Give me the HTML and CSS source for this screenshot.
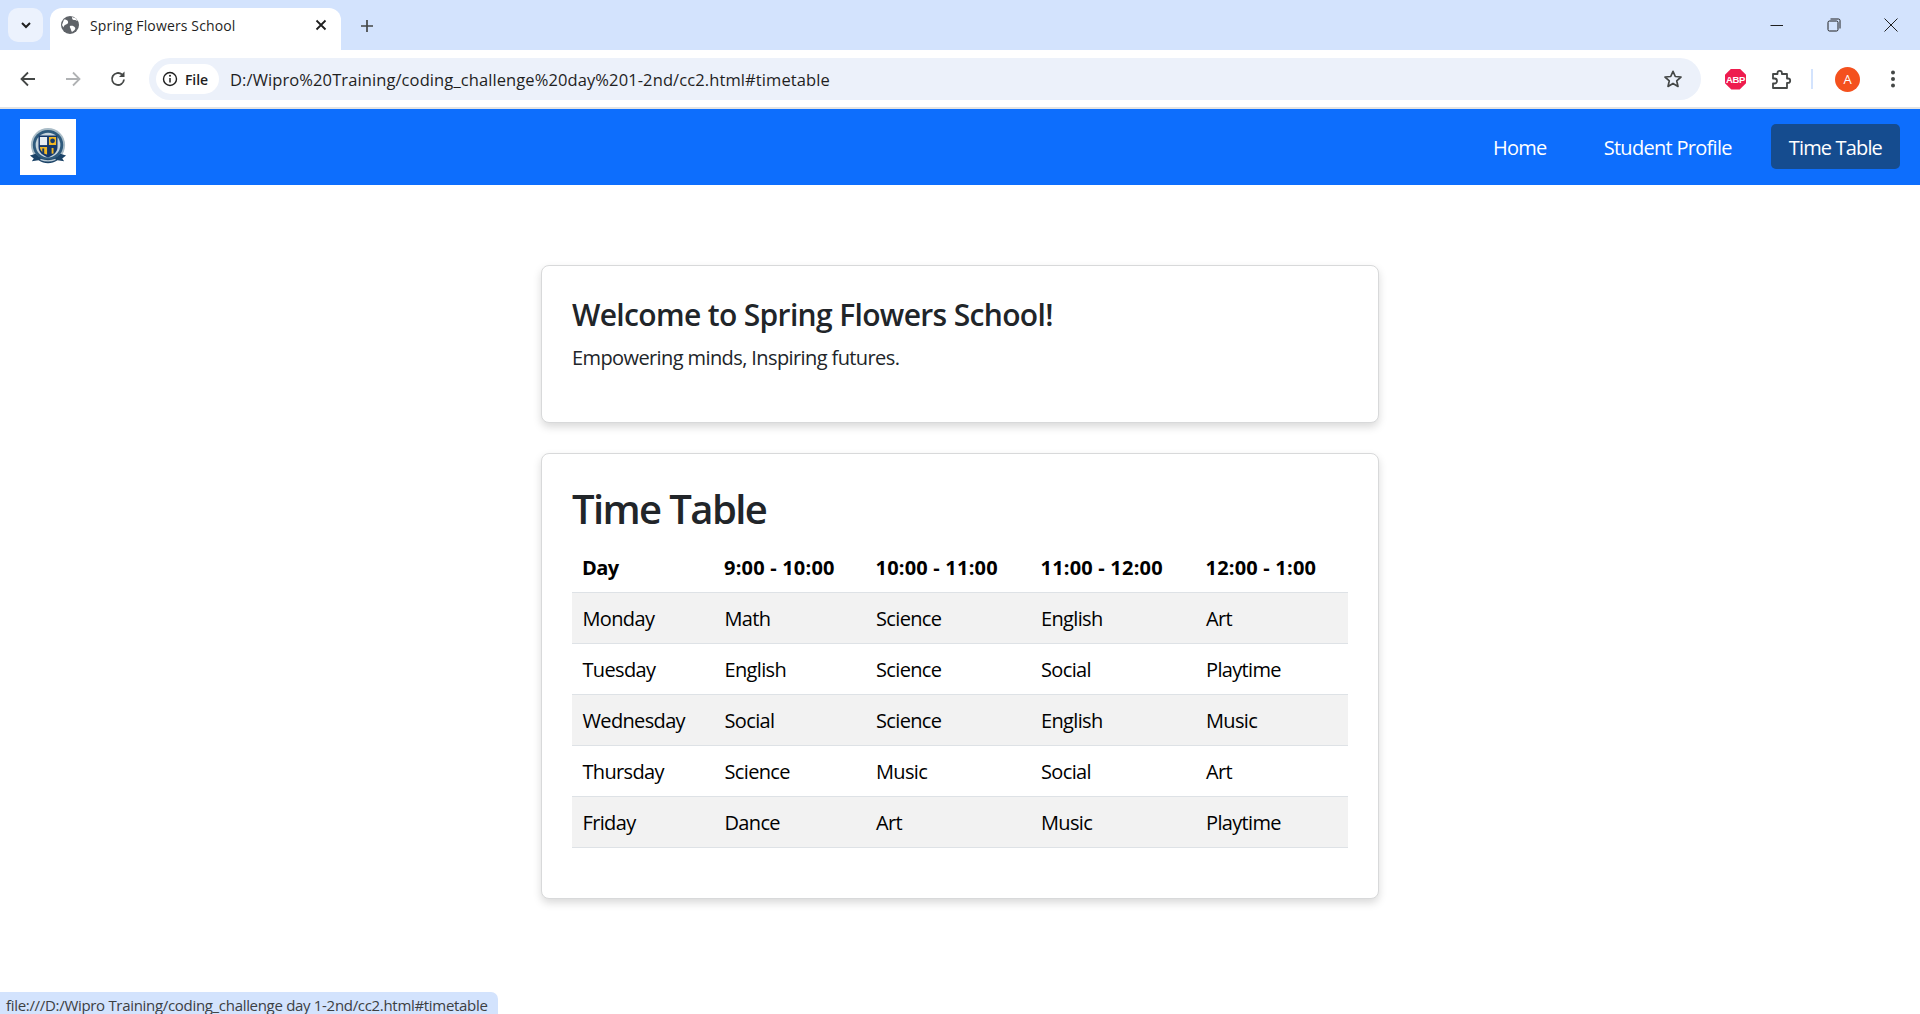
FILE: index.html
```html
<!DOCTYPE html>
<html lang="en">
<head>
<meta charset="utf-8">
<title>Spring Flowers School</title>
<link rel="stylesheet" href="styles.css">
</head>
<body>
<header class="browser">
  <div class="tabstrip">
    <button class="tab-search"><svg width="12" height="12" viewBox="0 0 12 12"><path d="M2 4l4 4 4-4" fill="none" stroke="#1f1f1f" stroke-width="2"/></svg></button>
    <div class="tab">
      <svg class="favicon" width="18" height="18" viewBox="0 0 18 18"><circle cx="9" cy="9" r="9" fill="#5f6368"/><path d="M3 3.500c2 0 3.500.5 4 2s-.5 2.500-2 3-2 1-2.500 3L1 9zM11 1c0 2 .5 3 2 3s2.500.5 3.500 1L15 2.500zM9 10c2-.5 4 0 5 1.500s-1 3.500-3 4.500c-1-1.500-1-2.500-1.500-3.500S8.500 11 9 10z" fill="#fff"/></svg>
      <span class="tab-title">Spring Flowers School</span>
      <svg class="tab-close" width="12" height="12" viewBox="0 0 12 12"><path d="M1.500 1.500l9 9m0-9l-9 9" stroke="#1f1f1f" stroke-width="1.800"/></svg>
    </div>
    <svg class="new-tab" width="14" height="14" viewBox="0 0 14 14"><path d="M7 1v12M1 7h12" stroke="#444746" stroke-width="1.700"/></svg>
    <div class="win-controls">
      <svg width="14" height="14" viewBox="0 0 14 14"><path d="M.5 7.500h12.500" stroke="#1f1f1f" stroke-width="1"/></svg>
      <svg width="14" height="14" viewBox="0 0 14 14"><rect x="1" y="3" width="10" height="10" rx="1.500" fill="none" stroke="#1f1f1f"/><path d="M3.500 1h8a1.500 1.500 0 0 1 1.500 1.500v8" fill="none" stroke="#1f1f1f"/></svg>
      <svg width="14" height="14" viewBox="0 0 14 14"><path d="M.5.500l13 13m0-13l-13 13" stroke="#1f1f1f" stroke-width="1"/></svg>
    </div>
  </div>
  <div class="toolbar">
    <svg class="nav-icon" width="18" height="18" viewBox="0 0 18 18"><path d="M16 9H3m6-6.500L2.500 9 9 15.500" fill="none" stroke="#444746" stroke-width="1.800"/></svg>
    <svg class="nav-icon" width="18" height="18" viewBox="0 0 18 18"><path d="M2 9h13M9 2.500L15.500 9 9 15.500" fill="none" stroke="#b0b2b4" stroke-width="1.800"/></svg>
    <svg class="nav-icon" width="18" height="18" viewBox="0 0 18 18"><path d="M15 9.500A6 6 0 1 1 13 4.500" fill="none" stroke="#444746" stroke-width="1.800"/><path d="M15.500 1.500v5.500H10z" fill="#444746"/></svg>
    <div class="omnibox">
      <div class="chip">
        <svg width="16" height="16" viewBox="0 0 16 16"><circle cx="8" cy="8" r="6.500" fill="none" stroke="#1f1f1f" stroke-width="1.400"/><path d="M8 7v4.500" stroke="#1f1f1f" stroke-width="1.500"/><circle cx="8" cy="4.800" r="1" fill="#1f1f1f"/></svg>
        <span>File</span>
      </div>
      <span class="url">D:/Wipro%20Training/coding_challenge%20day%201-2nd/cc2.html#timetable</span>
      <svg class="star" width="20" height="20" viewBox="0 0 20 20"><path d="M10 2.300l2.300 5.200 5.700.5-4.300 3.800 1.300 5.600-5-3-5 3 1.300-5.600L2 8l5.700-.5z" fill="none" stroke="#444746" stroke-width="1.700" stroke-linejoin="round"/></svg>
    </div>
    <div class="abp">ABP</div>
    <svg class="ext" width="22" height="22" viewBox="0 0 22 22"><path d="M3 6h4.500V5a2.200 2.200 0 0 1 4.400 0v1H17v4.500h1a2.200 2.200 0 0 1 0 4.400h-1V20H3v-4.500h1.500a2.500 2.500 0 0 0 0-5H3z" fill="none" stroke="#444746" stroke-width="1.800" stroke-linejoin="round"/></svg>
    <span class="divider"></span>
    <div class="avatar">A</div>
    <svg class="kebab" width="6" height="20" viewBox="0 0 6 20"><circle cx="3" cy="3.500" r="2" fill="#444746"/><circle cx="3" cy="10" r="2" fill="#444746"/><circle cx="3" cy="16.500" r="2" fill="#444746"/></svg>
  </div>
</header>

<nav class="navbar">
  <a class="logo" href="#">
    <svg width="38" height="38" viewBox="0 0 40 40">
      <circle cx="20" cy="18" r="18" fill="#a9bcc7"/>
      <circle cx="20" cy="18" r="16" fill="#2f5a7c"/>
      <circle cx="20" cy="18" r="13" fill="#c6d4dc"/>
      <path d="M10 8h20v12c0 6-5 9-10 11-5-2-10-5-10-11z" fill="#14386b"/>
      <path d="M11.500 9.500h7.500v8.500h-7.500z" fill="#e8eef2"/>
      <path d="M21 9.500h7.500v8.500H21zM11.500 20H19v8c-3-1-7-3-7.500-8z" fill="#f2b824"/>
      <path d="M21 20h7.500c-.5 5-4.500 7-7.500 8z" fill="#14386b"/>
      <circle cx="24.800" cy="13.500" r="2.500" fill="#14386b"/>
      <path d="M24.800 21v6" stroke="#f2b824" stroke-width="2"/>
      <path d="M15 21.500v5" stroke="#14386b" stroke-width="2"/>
      <path d="M1 29l6-2 3 3c6 4 14 4 20 0l3-3 6 2-4 3 2 3-7-1c-6 4-14 4-20 0l-7 1 2-3z" fill="#1c4468"/>
      <path d="M12 33c5 2 11 2 16 0" stroke="#b8c9d4" stroke-width="1.200" fill="none"/>
    </svg>
  </a>
  <ul class="nav-links">
    <li><a class="nav-link" href="#">Home</a></li>
    <li><a class="nav-link" href="#">Student Profile</a></li>
    <li><a class="nav-link active" href="#">Time Table</a></li>
  </ul>
</nav>

<main class="content">
  <section class="card card-welcome">
    <h3 class="welcome-title">Welcome to Spring Flowers School!</h3>
    <p class="welcome-text">Empowering minds, Inspiring futures.</p>
  </section>
  <section class="card card-table">
    <h2 class="table-title">Time Table</h2>
    <table class="timetable">
      <colgroup><col class="c1"><col class="c2"><col class="c3"><col class="c4"><col class="c5"></colgroup>
      <thead>
        <tr><th>Day</th><th>9:00 - 10:00</th><th>10:00 - 11:00</th><th>11:00 - 12:00</th><th>12:00 - 1:00</th></tr>
      </thead>
      <tbody>
        <tr><td>Monday</td><td>Math</td><td>Science</td><td>English</td><td>Art</td></tr>
        <tr><td>Tuesday</td><td>English</td><td>Science</td><td>Social</td><td>Playtime</td></tr>
        <tr><td>Wednesday</td><td>Social</td><td>Science</td><td>English</td><td>Music</td></tr>
        <tr><td>Thursday</td><td>Science</td><td>Music</td><td>Social</td><td>Art</td></tr>
        <tr><td>Friday</td><td>Dance</td><td>Art</td><td>Music</td><td>Playtime</td></tr>
      </tbody>
    </table>
  </section>
</main>

<div class="status">file:///D:/Wipro Training/coding_challenge day 1-2nd/cc2.html#timetable</div>
</body>
</html>
```
FILE: styles.css
```css
* { box-sizing: border-box; }
html, body { margin: 0; height: 100%; }
body {
  font-family: "Open Sans", "Noto Sans", "Liberation Sans", sans-serif;
  color: #212529;
  background: #fff;
  overflow: hidden;
}

/* browser chrome */
.browser { display: flex; flex-direction: column; }
.tabstrip {
  height: 50px;
  background: #d3e3fd;
  display: flex;
  align-items: flex-start;
  padding: 8px 0 0 8px;
}
.tab-search {
  width: 35px; height: 34px;
  border: 0; border-radius: 10px;
  background: #ecf2fd;
  display: flex; align-items: center; justify-content: center;
  padding: 0;
}
.tab {
  width: 291px; height: 42px;
  margin-left: 7px;
  background: #fff;
  border-radius: 12px 12px 0 0;
  display: flex; align-items: center;
  padding: 0 14px 8px 11px;
}
.favicon { flex: none; }
.tab-title {
  margin-left: 11px;
  font-size: 14px;
  letter-spacing: .14px;
  color: #1f1f1f;
  flex: 1;
}
.tab-close { flex: none; }
.new-tab { margin: 11px 0 0 19px; }
.win-controls {
  margin-left: auto;
  display: flex;
  gap: 43px;
  padding: 10px 22px 0 0;
}
.toolbar {
  height: 57px;
  background: #fff;
  border-radius: 10px 10px 0 0;
  display: flex;
  align-items: center;
  padding: 1px 0 0 19px;
}
.nav-icon { flex: none; margin-right: 27px; }
.nav-icon:nth-of-type(3) { margin-right: 22px; }
.omnibox {
  flex: none;
  width: 1552px;
  height: 42px;
  background: #ecf1fa;
  border-radius: 21px;
  display: flex; align-items: center;
  padding: 0 18px 0 7px;
}
.chip {
  height: 30px; width: 63px;
  background: #fff;
  border-radius: 15px;
  display: flex; align-items: center; gap: 7px;
  padding-left: 6px;
  font-size: 14px; font-weight: 600;
  letter-spacing: -0.1px;
  color: #1f1f1f;
}
.url {
  margin-left: 11px;
  font-size: 16.5px;
  letter-spacing: .1px;
  color: #1f1f1f;
  flex: 1;
}
.abp {
  flex: none;
  width: 21px; height: 21px;
  margin-left: 24px;
  background: #ee1c4e;
  clip-path: polygon(30% 0, 70% 0, 100% 30%, 100% 70%, 70% 100%, 30% 100%, 0 70%, 0 30%);
  color: #fff;
  font: 700 9.500px "Liberation Sans", sans-serif;
  letter-spacing: -.3px;
  display: flex; align-items: center; justify-content: center;
}
.ext { flex: none; margin-left: 24px; }
.divider {
  flex: none;
  width: 2px; height: 20px;
  background: #d3e3fd;
  margin-left: 19px;
}
.avatar {
  flex: none;
  width: 25px; height: 25px;
  margin-left: 22px;
  border-radius: 50%;
  background: #f4511e;
  color: #fff;
  font-size: 13px;
  display: flex; align-items: center; justify-content: center;
}
.kebab { flex: none; margin-left: 30px; }

/* navbar */
.navbar {
  height: 78px;
  border-top: 2px solid #e3e3e3;
  background: #0d6efd;
  display: flex;
  align-items: center;
  justify-content: space-between;
  padding: 0 20px;
}
.logo {
  width: 56px; height: 56px;
  background: #fff;
  display: flex; align-items: center; justify-content: center;
}
.nav-links {
  list-style: none;
  margin: 0 0 1px; padding: 0;
  display: flex;
  gap: 21px;
}
.nav-link {
  display: block;
  height: 45px;
  line-height: 47px;
  padding: 0 18px;
  font-size: 20px;
  letter-spacing: -0.7px;
  color: #fff;
  text-decoration: none;
  border-radius: 5px;
}
.nav-link.active { background: #154c8f; letter-spacing: -0.85px; }

/* main */
.content {
  width: 838px;
  margin: 80px auto 0;
  display: flex;
  flex-direction: column;
  gap: 30px;
}
.card {
  background: #fff;
  border: 1px solid #d8d9da;
  border-radius: 8px;
  box-shadow: 0 4px 8px rgba(0,0,0,.15);
  padding: 30px;
}
.card-welcome { height: 158px; }
.card-table { height: 446px; }
.welcome-title {
  margin: 1px 0 0;
  font-size: 30px;
  line-height: 36px;
  font-weight: 600;
  letter-spacing: -0.65px;
}
.welcome-text {
  margin: 10px 0 0;
  font-size: 20px;
  line-height: 30px;
  letter-spacing: -0.6px;
}
.table-title {
  margin: 1px 0 0;
  font-size: 40px;
  line-height: 48px;
  font-weight: 600;
  letter-spacing: -1.6px;
}
.timetable {
  width: 776px;
  margin-top: 13px;
  border-collapse: collapse;
  table-layout: fixed;
  color: #000;
  font-size: 20px;
  letter-spacing: -0.65px;
}
.c1 { width: 142px; }
.c2 { width: 151.500px; }
.c3 { width: 165px; }
.c4 { width: 165px; }
.c5 { width: 152.500px; }
.timetable th, .timetable td {
  height: 51px;
  padding: 0 10px;
  text-align: left;
  border-bottom: 1px solid #dee2e6;
  white-space: nowrap;
}
.timetable td { padding: 2px 10px 0 10.5px; }
.timetable th { height: 46px; font-weight: 700; letter-spacing: .2px; padding-bottom: 2px; }
.timetable th:first-child { letter-spacing: -0.6px; }
.timetable tbody tr:nth-child(odd) { background: #f2f2f2; }

.status {
  position: fixed;
  left: 0; bottom: 0;
  width: 498px; height: 22px;
  background: #d3e3fd;
  border-top-right-radius: 7px;
  padding-left: 6px;
  font-size: 15px;
  line-height: 26px;
  letter-spacing: -0.31px;
  color: #3c4043;
  white-space: nowrap;
  overflow: hidden;
}
```
